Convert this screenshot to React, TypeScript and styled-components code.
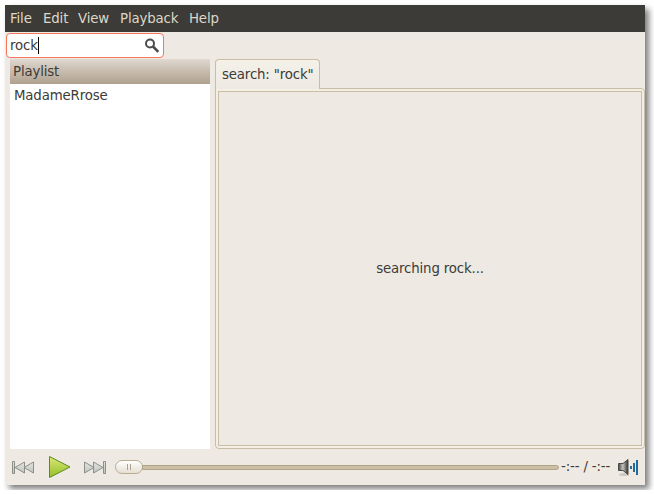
import React from "react";
import styled, { createGlobalStyle } from "styled-components";

const GlobalStyle = createGlobalStyle`
  * { box-sizing: border-box; }
  body {
    margin: 0;
    background: #fff;
    overflow: hidden;
    font-family: "DejaVu Sans", sans-serif;
    font-size: 13.33px;
    letter-spacing: -0.15px;
    line-height: 16px;
    color: #3c3b37;
  }
`;

const Window = styled.div`
  display: flex;
  flex-direction: column;
  width: 640px;
  height: 480px;
  margin: 5px;
  background: #eeeae3;
  box-shadow: 4px 4px 6px rgba(0, 0, 0, 0.5);
`;

const MenuBar = styled.nav`
  display: flex;
  gap: 10px;
  height: 27px;
  padding: 6px 5px 0;
  background: #3c3b37;
  color: #dfd8c8;
`;

const MenuItem = styled.span<{ $width: number }>`
  width: ${(p) => p.$width}px;
  white-space: nowrap;
`;

const SearchEntry = styled.div`
  display: flex;
  align-items: center;
  width: 158px;
  height: 25px;
  margin: 1px 0 1px 1px;
  padding: 0 3px;
  border: 1px solid #f5765a;
  border-radius: 4px;
  background: #fff;
`;

const Caret = styled.i`
  width: 1px;
  height: 17px;
  background: #000;
`;

const SearchIcon = styled.svg`
  margin-left: auto;
`;

const Main = styled.div`
  display: flex;
  gap: 5px;
  height: 390px;
  padding-left: 5px;
`;

const Sidebar = styled.aside`
  width: 200px;
  background: #fff;
`;

const ListHeader = styled.div`
  height: 25px;
  padding: 5px 3px 0;
  background: linear-gradient(#e0d9d0, #c6bbad 50%, #b0a18f);
`;

const ListRow = styled.div`
  padding: 4px;
`;

const Notebook = styled.section`
  display: flex;
  flex-direction: column;
  width: 430px;
`;

const Tab = styled.div`
  width: 105px;
  height: 30px;
  padding: 7px 6px;
  margin-bottom: -1px;
  border: 1px solid #c9bda6;
  border-bottom: 0;
  border-radius: 4px 4px 0 0;
  background: linear-gradient(#f4f1e9, #eeeae3);
  white-space: nowrap;
  z-index: 1;
`;

const TabPage = styled.div`
  flex: 1;
  padding: 2px;
  border: 1px solid #c9bda6;
  border-radius: 0 4px 4px 4px;
  background: #f3efe5;
`;

const ResultFrame = styled.div`
  display: flex;
  align-items: center;
  justify-content: center;
  height: 100%;
  border: 1px solid #c9bda6;
  background: #eeeae3;
`;

const Controls = styled.footer`
  display: flex;
  align-items: center;
  height: 36px;
  padding-left: 6px;
`;

const ControlIcon = styled.svg<{ $gap: number }>`
  flex: none;
  margin-left: ${(p) => p.$gap}px;
`;

const Slider = styled.div`
  display: flex;
  align-items: center;
  width: 444px;
  margin-left: 8px;
`;

const Thumb = styled.div`
  display: flex;
  align-items: center;
  justify-content: center;
  gap: 2px;
  flex: none;
  width: 28px;
  height: 14px;
  border: 1px solid #b9ad98;
  border-radius: 7px;
  background: linear-gradient(#fffefc, #e6dfd3);
`;

const Grip = styled.i`
  width: 1px;
  height: 6px;
  background: #aca18e;
`;

const Track = styled.div`
  flex: 1;
  height: 5px;
  margin-left: -1px;
  border: 1px solid #b0a487;
  border-radius: 0 3px 3px 0;
  background: #cbbfa6;
`;

const Time = styled.span`
  width: 51px;
  margin-left: 2px;
  white-space: nowrap;
`;

const menus: [string, number][] = [["File", 23], ["Edit", 25], ["View", 32], ["Playback", 59], ["Help", 31]];

const SkipShapes = () => (
  <g fill="url(#silver)" stroke="#8b8f87">
    <path d="M1.5 1.5h2v12h-2z" />
    <path d="M13.5 2v11L4 7.5z" />
    <path d="M22.5 2v11L13 7.5z" />
  </g>
);

export default function App() {
  return (
    <>
      <GlobalStyle />
      <Window>
        <MenuBar>
          {menus.map(([label, width]) => (
            <MenuItem key={label} $width={width}>{label}</MenuItem>
          ))}
        </MenuBar>
        <SearchEntry>
          rock
          <Caret />
          <SearchIcon width="16" height="16" viewBox="0 0 16 16" fill="none" stroke="#4b4b4b">
            <circle cx="6" cy="5.5" r="4" strokeWidth="2" />
            <path d="M9 8.5l5.3 5.3" strokeWidth="2.6" />
          </SearchIcon>
        </SearchEntry>
        <Main>
          <Sidebar>
            <ListHeader>Playlist</ListHeader>
            <ListRow>MadameRrose</ListRow>
          </Sidebar>
          <Notebook>
            <Tab>search: "rock"</Tab>
            <TabPage>
              <ResultFrame>searching rock...</ResultFrame>
            </TabPage>
          </Notebook>
        </Main>
        <Controls>
          <ControlIcon $gap={0} width="24" height="15" viewBox="0 0 24 15">
            <defs>
              <linearGradient id="silver" x2="0" y2="1">
                <stop stopColor="#e3e4df" />
                <stop offset="1" stopColor="#bfc4c0" />
              </linearGradient>
            </defs>
            <SkipShapes />
          </ControlIcon>
          <ControlIcon $gap={13} width="24" height="24" viewBox="0 0 24 24">
            <defs>
              <linearGradient id="lime" x2="0" y2="1">
                <stop stopColor="#dce779" />
                <stop offset="1" stopColor="#92bf26" />
              </linearGradient>
            </defs>
            <path d="M1.5 1.5v21L22 12z" fill="url(#lime)" stroke="#5c8c1c" />
          </ControlIcon>
          <ControlIcon $gap={11} width="24" height="15" viewBox="0 0 24 15">
            <g transform="translate(24 0) scale(-1 1)">
              <SkipShapes />
            </g>
          </ControlIcon>
          <Slider>
            <Thumb><Grip /><Grip /></Thumb>
            <Track />
          </Slider>
          <Time>-:-- / -:--</Time>
          <ControlIcon $gap={6} width="22" height="20" viewBox="0 0 22 20">
            <defs>
              <linearGradient id="metal">
                <stop stopColor="#444" />
                <stop offset=".45" stopColor="#c4c4c0" />
                <stop offset="1" stopColor="#333" />
              </linearGradient>
            </defs>
            <ellipse cx="6" cy="17.5" rx="5" ry="1.5" fill="#cfcac1" />
            <path d="M.5 6.5h4.5l5-4v15l-5-4H.5z" fill="url(#metal)" stroke="#4a4a47" />
            <path d="M13 9v3M16 6v9M19 3v15" stroke="#236a9c" strokeWidth="2" />
          </ControlIcon>
        </Controls>
      </Window>
    </>
  );
}
